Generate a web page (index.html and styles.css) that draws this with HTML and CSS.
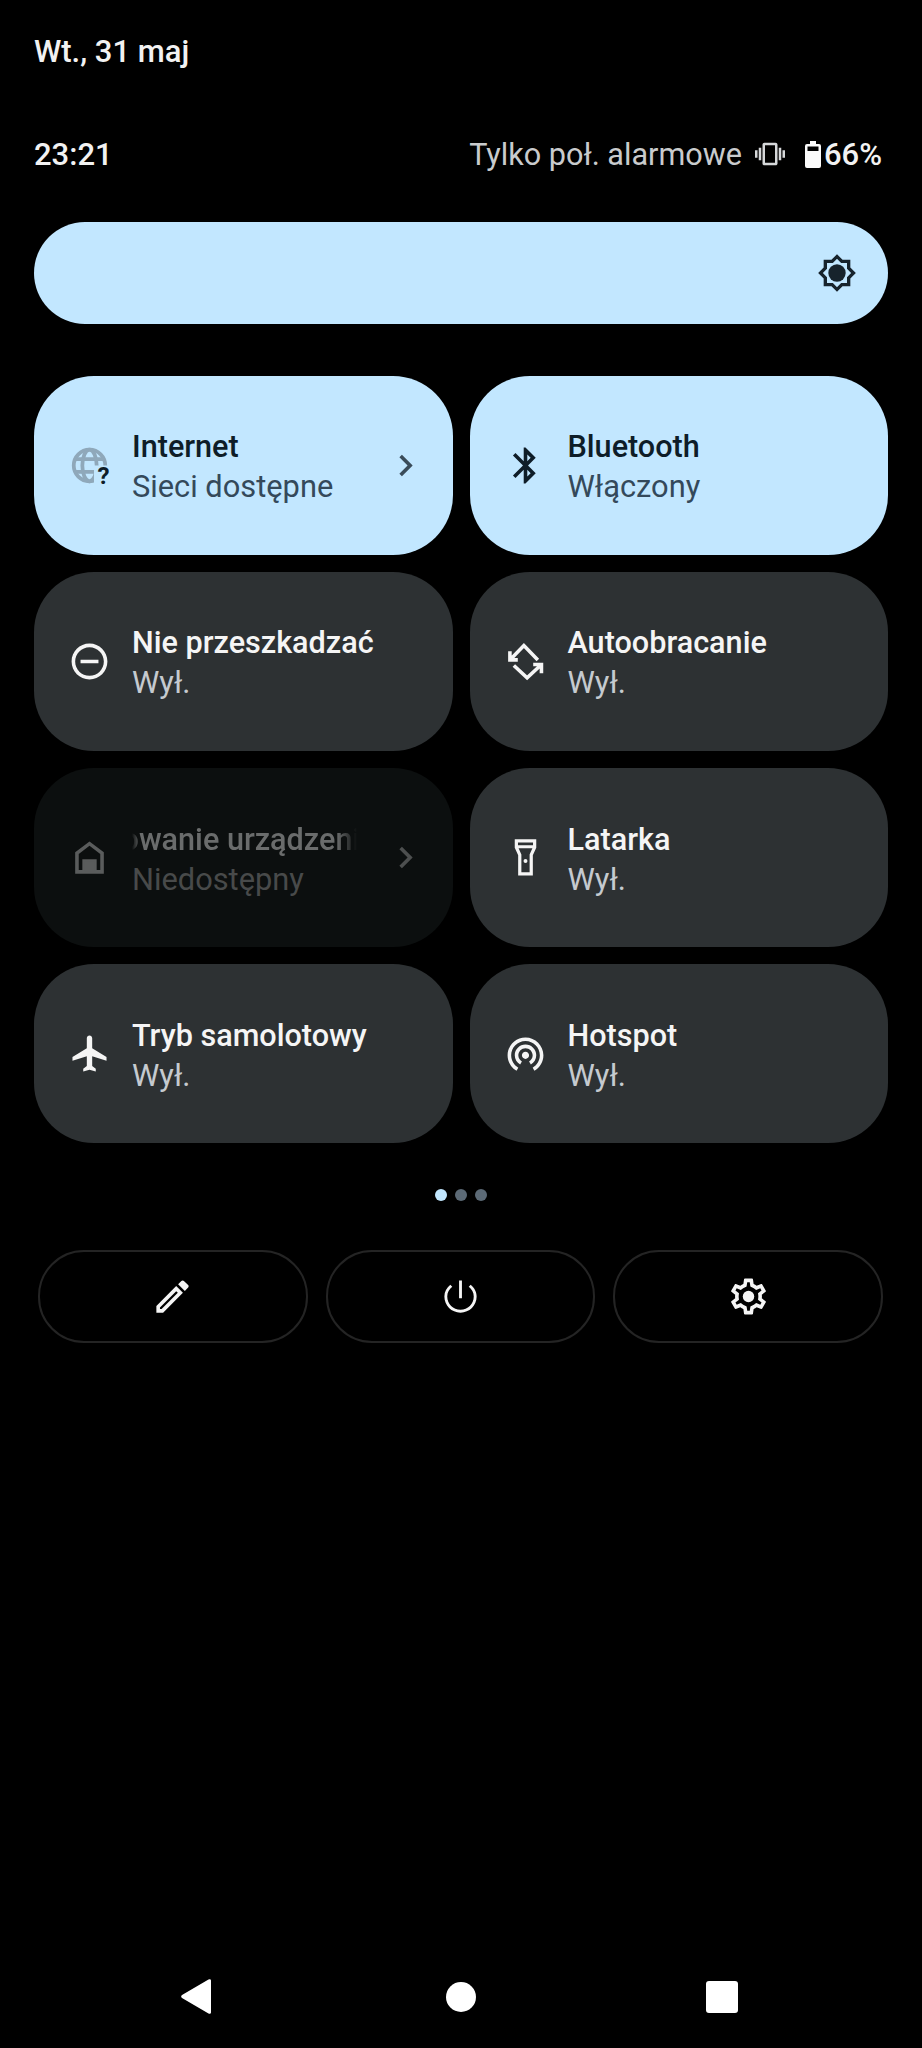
FILE: index.html
```html
<!DOCTYPE html>
<html lang="pl">
<head>
<meta charset="utf-8">
<title>Szybkie ustawienia</title>
<link rel="stylesheet" href="styles.css">
</head>
<body>
<div class="panel">
	<div class="date">Wt., 31 maj</div>

	<div class="status">
		<span class="time">23:21</span>
		<span class="status_right">
			<span class="alarm">Tylko poł. alarmowe</span>
			<svg class="ico_vib" viewBox="0 0 24 24"><path d="M0 15h2V9H0v6zm3 2h2V7H3v10zm19-8v6h2V9h-2zm-3 8h2V7h-2v10zM16.5 3h-9C6.67 3 6 3.67 6 4.5v15c0 .83.67 1.5 1.5 1.5h9c.83 0 1.5-.67 1.5-1.5v-15c0-.83-.67-1.5-1.5-1.5zM16 19H8V5h8v14z"/></svg>
			<svg class="ico_batt" viewBox="0 0 16 27"><path fill-rule="evenodd" d="M5 0h6v3h3a2 2 0 0 1 2 2v20a2 2 0 0 1-2 2H2a2 2 0 0 1-2-2V5a2 2 0 0 1 2-2h3zM2.5 5.5V10h11V5.500z"/></svg>
			<span class="percent">66%</span>
		</span>
	</div>

	<div class="slider">
		<svg class="ico_bright" viewBox="0 0 24 24"><path d="M20 8.690V4h-4.690L12 .69 8.690 4H4v4.690L.69 12 4 15.310V20h4.690L12 23.310 15.310 20H20v-4.690L23.310 12 20 8.690zm-2 5.790V18h-3.520L12 20.480 9.520 18H6v-3.520L3.520 12 6 9.520V6h3.520L12 3.520 14.480 6H18v3.520L20.480 12 18 14.480z"/><circle cx="12" cy="12" r="5.200"/></svg>
	</div>

	<div class="tiles">
		<div class="tile on">
			<svg class="ico" viewBox="0 0 24 24">
				<g class="globe">
					<circle cx="12" cy="12" r="8.800"/>
					<ellipse cx="12" cy="12" rx="4" ry="8.800"/>
					<path d="M3.500 8.500h17M3.500 15.500h17"/>
				</g>
				<rect class="globe_cut" x="14.500" y="12" width="9.500" height="12"/>
				<text class="globe_q" x="19.800" y="22.500">?</text>
			</svg>
			<div class="txt"><strong>Internet</strong><span>Sieci dostępne</span></div>
			<svg class="chev" viewBox="0 0 24 24"><path d="M10 6L8.590 7.410 13.170 12l-4.580 4.590L10 18l6-6z"/></svg>
		</div>
		<div class="tile on">
			<svg class="ico" viewBox="0 0 24 24"><path d="M17.710 7.710L12 2h-1v7.590L6.410 5 5 6.410 10.590 12 5 17.590 6.410 19 11 14.410V22h1l5.710-5.710-4.300-4.290 4.300-4.290zM13 5.830l1.880 1.880L13 9.590V5.830zm1.880 10.460L13 18.170v-3.760l1.880 1.880z"/></svg>
			<div class="txt"><strong>Bluetooth</strong><span>Włączony</span></div>
		</div>
		<div class="tile">
			<svg class="ico" viewBox="0 0 24 24"><path d="M12 2C6.480 2 2 6.480 2 12s4.480 10 10 10 10-4.480 10-10S17.520 2 12 2zm0 18c-4.410 0-8-3.590-8-8s3.590-8 8-8 8 3.590 8 8-3.590 8-8 8zM7 11h10v2H7z"/></svg>
			<div class="txt"><strong>Nie przeszkadzać</strong><span>Wył.</span></div>
		</div>
		<div class="tile">
			<svg class="ico" viewBox="0 0 24 24"><path class="line" d="M3.300 6.300v4.800h4.400M3.300 11.100l7.800-8 7.800 8M5.500 14.200l7.400 6.900 8-7.400M16.300 13.700h4.600v4.800"/></svg>
			<div class="txt"><strong>Autoobracanie</strong><span>Wył.</span></div>
		</div>
		<div class="tile off">
			<svg class="ico" viewBox="0 0 24 24"><path fill-rule="evenodd" d="M12 3L4 9v12h16V9zm0 2.500l6 4.500v9h-2v-6H8v6H6v-9z"/><rect class="door" x="9" y="14" width="6" height="6"/></svg>
			<div class="txt"><strong class="marquee"><b>Sterowanie urządzeniami</b></strong><span>Niedostępny</span></div>
			<svg class="chev" viewBox="0 0 24 24"><path d="M10 6L8.590 7.410 13.170 12l-4.580 4.590L10 18l6-6z"/></svg>
		</div>
		<div class="tile">
			<svg class="ico" viewBox="0 0 24 24"><path class="line thin" d="M6.900 2.700h10.200v3.600l-1.900 4.200v10.600H8.800V10.500L6.900 6.300zM6.900 6h10.200"/><circle cx="12" cy="13.900" r="1.100"/></svg>
			<div class="txt"><strong>Latarka</strong><span>Wył.</span></div>
		</div>
		<div class="tile">
			<svg class="ico" viewBox="0 0 24 24"><path d="M21 16v-2l-8-5V3.500c0-.83-.67-1.500-1.500-1.500S10 2.670 10 3.500V9l-8 5v2l8-2.500V19l-2 1.500V22l3.500-1 3.500 1v-1.500L13 19v-5.500l8 2.500z" transform="translate(.5 0)"/></svg>
			<div class="txt"><strong>Tryb samolotowy</strong><span>Wył.</span></div>
		</div>
		<div class="tile">
			<svg class="ico" viewBox="0 0 24 24"><path d="M12 11c-1.100 0-2 .9-2 2s.9 2 2 2 2-.9 2-2-.9-2-2-2zm6 2c0-3.310-2.690-6-6-6s-6 2.690-6 6c0 2.220 1.210 4.150 3 5.190l1-1.740c-1.190-.7-2-1.970-2-3.450 0-2.210 1.790-4 4-4s4 1.790 4 4c0 1.480-.81 2.750-2 3.450l1 1.740c1.790-1.040 3-2.970 3-5.190zM12 3C6.480 3 2 7.480 2 13c0 3.700 2.010 6.920 4.990 8.650l1-1.730C5.610 18.530 4 15.960 4 13c0-4.420 3.580-8 8-8s8 3.580 8 8c0 2.960-1.610 5.530-4 6.920l1 1.730c2.990-1.730 5-4.950 5-8.650 0-5.520-4.480-10-10-10z"/></svg>
			<div class="txt"><strong>Hotspot</strong><span>Wył.</span></div>
		</div>
	</div>

	<div class="dots"><i class="cur"></i><i></i><i></i></div>

	<div class="actions">
		<div class="act"><svg viewBox="0 0 24 24"><path d="M14.060 9.020l.92.92L5.920 19H5v-.92l9.060-9.060M14.060 6.190L3 17.250V21h3.750L17.810 9.940l-3.750-3.750z" fill-rule="evenodd"/><path d="M17.660 3c-.25 0-.51.1-.7.290l-1.830 1.830 3.750 3.750 1.830-1.830c.39-.39.39-1.020 0-1.410l-2.340-2.340c-.2-.2-.45-.29-.71-.29z"/></svg></div>
		<div class="act"><svg viewBox="0 0 24 24"><path d="M12.800 3h-1.600v10h1.600V3zm4.900 2.400l-1.100 1.200C18.300 7.900 19.400 9.800 19.400 12c0 4.100-3.300 7.400-7.400 7.400S4.600 16.100 4.600 12c0-2.200 1.100-4.100 2.800-5.400L6.300 5.400C4.300 7 3 9.300 3 12c0 5 4 9 9 9s9-4 9-9c0-2.700-1.300-5-3.300-6.600z"/></svg></div>
		<div class="act"><svg viewBox="0 0 24 24"><path d="M19.430 12.980c.04-.32.07-.64.07-.98 0-.34-.03-.66-.07-.98l2.110-1.650c.19-.15.24-.42.12-.64l-2-3.460c-.09-.16-.26-.25-.44-.25-.06 0-.12.01-.17.03l-2.490 1c-.52-.4-1.080-.73-1.690-.98l-.38-2.650C14.460 2.180 14.250 2 14 2h-4c-.25 0-.46.18-.49.42l-.38 2.650c-.61.25-1.170.59-1.690.98l-2.490-1c-.06-.02-.12-.03-.18-.03-.17 0-.34.09-.43.25l-2 3.460c-.13.22-.07.49.12.64l2.110 1.650c-.04.32-.07.65-.07.98 0 .33.03.66.07.98l-2.110 1.650c-.19.15-.24.42-.12.64l2 3.460c.09.16.26.25.44.25.06 0 .12-.01.17-.03l2.490-1c.52.4 1.080.73 1.690.98l.38 2.650c.03.24.24.42.49.42h4c.25 0 .46-.18.49-.42l.38-2.650c.61-.25 1.170-.59 1.690-.98l2.490 1c.06.02.12.03.18.03.17 0 .34-.09.43-.25l2-3.460c.12-.22.07-.49-.12-.64l-2.110-1.650zm-1.980-1.710c.04.31.05.52.05.73 0 .21-.02.43-.05.73l-.14 1.130.89.7 1.080.84-.7 1.210-1.270-.51-1.040-.42-.9.68c-.43.32-.84.56-1.250.73l-1.060.43-.16 1.130-.2 1.350h-1.400l-.19-1.350-.16-1.130-1.060-.43c-.43-.18-.83-.41-1.230-.71l-.91-.7-1.060.43-1.270.51-.7-1.210 1.080-.84.89-.7-.14-1.130c-.03-.31-.05-.54-.05-.74s.02-.43.05-.73l.14-1.130-.89-.7-1.080-.84.7-1.210 1.270.51 1.040.42.9-.68c.43-.32.84-.56 1.250-.73l1.060-.43.16-1.130.2-1.350h1.390l.19 1.350.16 1.130 1.060.43c.43.18.83.41 1.230.71l.91.7 1.060-.43 1.270-.51.7 1.210-1.070.85-.89.7.14 1.130z"/><circle cx="12" cy="12" r="3.200"/></svg></div>
	</div>

	<div class="nav">
		<svg class="nav_back" viewBox="0 0 30 35"><path d="M27.500 .6a1.500 1.500 0 0 1 2.500 1.200v31.400a1.500 1.500 0 0 1-2.500 1.200L1 19a2 2 0 0 1 0-3z"/></svg>
		<span class="nav_home"></span>
		<span class="nav_recent"></span>
	</div>
</div>
</body>
</html>
```

FILE: styles.css
```css
* {margin:0; padding:0; box-sizing:border-box}
html, body {background:#000}
body {width:922px; height:2048px; overflow:hidden; font-family:Roboto, "Noto Sans", sans-serif;}
svg {display:block; fill:currentColor}

.panel {
	display:flex;
	flex-direction:column;
	height:2048px;
	padding:32px 34px 0 34px;
	color:#f2f2f2;
}

/* top text */
.date {
	font-size:31px;
	font-weight:500;
	line-height:40px;
}
.status {
	display:flex;
	justify-content:space-between;
	align-items:center;
	height:40px;
	margin-top:62px;
}
.time {
	font-size:31px;
	font-weight:500;
}
.status_right {
	display:flex;
	align-items:center;
	padding-right:6px;
}
.alarm {
	font-size:30.600px;
	color:#c9cbcd;
	margin-right:13px;
}
.ico_vib {width:30px; height:30px; color:#d6d8da;}
.ico_batt {width:16px; height:27px; margin-left:20px; color:#fafafa;}
.percent {
	font-size:31px;
	font-weight:500;
	margin-left:3px;
}

/* brightness */
.slider {
	display:flex;
	justify-content:flex-end;
	align-items:center;
	height:102px;
	margin-top:48px;
	padding-right:31px;
	background:#c2e7ff;
	border-radius:51px;
}
.ico_bright {width:40px; height:40px; color:#17232c;}

/* tiles */
.tiles {
	display:grid;
	grid-template-columns:1fr 1fr;
	grid-auto-rows:179px;
	column-gap:17px;
	row-gap:17.3px;
	margin-top:51.500px;
}
.tile {
	display:flex;
	align-items:center;
	padding:0 34px;
	background:#2d3133;
	border-radius:60px;
	color:#f5f5f5;
}
.tile.on {background:#c2e7ff; color:#0e1d28;}
.tile.off {background:#0c0f0f; color:#5a5c5c;}
.ico {flex:none; width:43px; height:43px; margin-right:21px; overflow:visible;}
.chev {flex:none; width:43px; height:43px; margin-left:auto; margin-right:-8px; color:#3a4c59;}
.off .chev {color:#4d4f4f;}
.off .door {opacity:.6}
.line {fill:none; stroke:currentColor; stroke-width:2;}
.thin {stroke-width:1.800;}

.globe {fill:none; stroke:#8fa8ba; stroke-width:2.100;}
.globe_cut {fill:#c2e7ff;}
.globe_q {font-size:13.500px; font-weight:700; fill:#0e1d28; text-anchor:middle;}

.txt {display:flex; flex-direction:column; min-width:0; padding-top:3px;}
.txt strong {
	font-size:30.600px;
	font-weight:500;
	line-height:41px;
	white-space:nowrap;
}
.txt span {
	font-size:30.800px;
	line-height:40px;
	white-space:nowrap;
	color:#c5cacf;
}
.on .txt span {color:#34495a;}
.off .txt strong {color:#6a6c6c;}
.off .txt span {color:#484a4a;}

.marquee {
	width:227px;
	overflow:hidden;
	-webkit-mask-image:linear-gradient(to right, transparent 0, #000 8px, #000 205px, transparent 225px);
	mask-image:linear-gradient(to right, transparent 0, #000 8px, #000 205px, transparent 225px);
}
.marquee b {font-weight:500; margin-left:-66px;}

/* page dots */
.dots {
	display:flex;
	justify-content:center;
	gap:8px;
	margin-top:45.500px;
}
.dots i {
	width:12px;
	height:12px;
	border-radius:50%;
	background:#5c6a76;
}
.dots i.cur {background:#c2e7ff;}

/* bottom buttons */
.actions {
	display:flex;
	gap:18px;
	margin:49px 5px 0 4px;
}
.act {
	display:flex;
	flex:1;
	justify-content:center;
	align-items:center;
	height:93px;
	border:2px solid #242424;
	border-radius:46px;
	color:#f5f5f5;
}
.act svg {width:43px; height:43px;}

/* nav bar */
.nav {
	display:flex;
	align-items:center;
	margin-top:auto;
	padding:0 0 34px 147px;
	color:#fff;
}
.nav_back {width:30px; height:35px;}
.nav_home {
	width:30px;
	height:30px;
	margin-left:235px;
	border-radius:50%;
	background:#fff;
}
.nav_recent {
	width:32px;
	height:32px;
	margin-left:230px;
	border-radius:3px;
	background:#fff;
}
```
